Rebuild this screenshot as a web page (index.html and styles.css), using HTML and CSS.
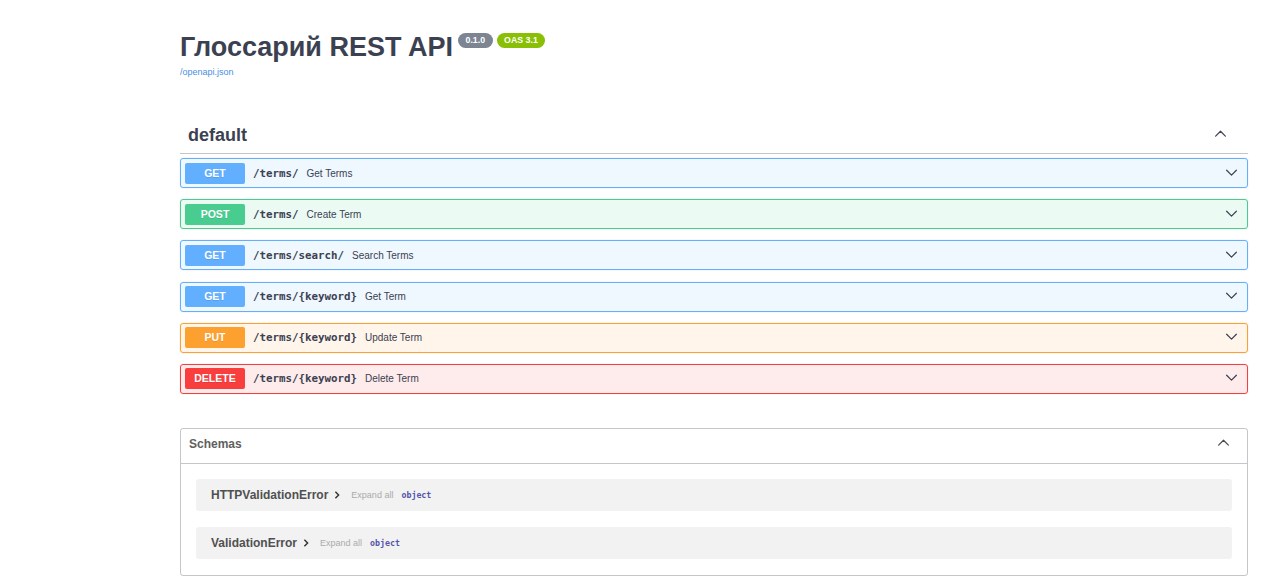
FILE: index.html
```html
<!DOCTYPE html>
<html lang="ru">
<head>
<meta charset="utf-8">
<title>Глоссарий REST API</title>
<link rel="stylesheet" href="styles.css">
</head>
<body>
<div class="wrapper">
  <section class="info">
    <div class="title-row">
      <h1 class="title">Глоссарий REST API</h1>
      <span class="badge badge-version">0.1.0</span>
      <span class="badge badge-oas">OAS 3.1</span>
    </div>
    <a class="spec-link" href="#">/openapi.json</a>
  </section>

  <section class="tag-section">
    <div class="tag-header">
      <h3 class="tag-name">default</h3>
      <svg class="arrow arrow-up" viewBox="0 0 20 20" width="15" height="15"><path d="M3.5 13.5 10 7l6.5 6.5"/></svg>
    </div>

    <div class="opblock opblock-get">
      <span class="method">GET</span>
      <span class="path">/terms/</span>
      <span class="summary">Get Terms</span>
      <svg class="arrow" viewBox="0 0 20 20" width="15" height="15"><path d="M3.5 7 10 13.5 16.5 7"/></svg>
    </div>
    <div class="opblock opblock-post">
      <span class="method">POST</span>
      <span class="path">/terms/</span>
      <span class="summary">Create Term</span>
      <svg class="arrow" viewBox="0 0 20 20" width="15" height="15"><path d="M3.5 7 10 13.5 16.5 7"/></svg>
    </div>
    <div class="opblock opblock-get">
      <span class="method">GET</span>
      <span class="path">/terms/search/</span>
      <span class="summary">Search Terms</span>
      <svg class="arrow" viewBox="0 0 20 20" width="15" height="15"><path d="M3.5 7 10 13.5 16.5 7"/></svg>
    </div>
    <div class="opblock opblock-get">
      <span class="method">GET</span>
      <span class="path">/terms/{keyword}</span>
      <span class="summary">Get Term</span>
      <svg class="arrow" viewBox="0 0 20 20" width="15" height="15"><path d="M3.5 7 10 13.5 16.5 7"/></svg>
    </div>
    <div class="opblock opblock-put">
      <span class="method">PUT</span>
      <span class="path">/terms/{keyword}</span>
      <span class="summary">Update Term</span>
      <svg class="arrow" viewBox="0 0 20 20" width="15" height="15"><path d="M3.5 7 10 13.5 16.5 7"/></svg>
    </div>
    <div class="opblock opblock-delete">
      <span class="method">DELETE</span>
      <span class="path">/terms/{keyword}</span>
      <span class="summary">Delete Term</span>
      <svg class="arrow" viewBox="0 0 20 20" width="15" height="15"><path d="M3.5 7 10 13.5 16.5 7"/></svg>
    </div>
  </section>

  <section class="models">
    <div class="models-header">
      <h4 class="models-title">Schemas</h4>
      <svg class="arrow arrow-up-light" viewBox="0 0 20 20" width="15" height="15"><path d="M3.5 13.5 10 7l6.5 6.5"/></svg>
    </div>
    <div class="models-body">
      <div class="model-container">
        <span class="model-name">HTTPValidationError</span>
        <svg class="model-toggle" viewBox="0 0 6 10" width="6" height="8"><path d="M1 1l4 4-4 4"/></svg>
        <span class="expand-all">Expand all</span>
        <span class="prop-type">object</span>
      </div>
      <div class="model-container">
        <span class="model-name">ValidationError</span>
        <svg class="model-toggle" viewBox="0 0 6 10" width="6" height="8"><path d="M1 1l4 4-4 4"/></svg>
        <span class="expand-all">Expand all</span>
        <span class="prop-type">object</span>
      </div>
    </div>
  </section>
</div>
</body>
</html>
```

FILE: styles.css
```css
html, body {
  margin: 0;
  padding: 0;
  background: #ffffff;
}

body {
  font-family: "Liberation Sans", Arial, sans-serif;
  color: #3b4151;
}

.wrapper {
  margin-left: 180px;
  width: 1068px;
  padding-top: 29px;
}

/* ---------- info ---------- */
.info {
  margin-bottom: 38px;
}

.title-row {
  display: flex;
  align-items: flex-start;
}

.title {
  margin: 0;
  font-size: 27px;
  line-height: 36px;
  font-weight: 700;
  color: #3b4151;
}

.badge {
  display: inline-block;
  margin-top: 4px;
  margin-left: 4px;
  padding: 0 7.5px;
  height: 15px;
  line-height: 15px;
  border-radius: 43px;
  font-size: 8.8px;
  font-weight: 700;
  color: #ffffff;
}

.badge-version {
  margin-left: 5px;
  background: #7d8492;
}

.badge-oas {
  background: #89bf04;
}

.spec-link {
  display: block;
  margin-top: 1px;
  font-size: 9px;
  line-height: 12px;
  color: #4990e2;
  text-decoration: none;
}

/* ---------- tag ---------- */
.tag-section {
  margin-bottom: 34px;
}

.tag-header {
  display: flex;
  align-items: center;
  justify-content: space-between;
  height: 37px;
  padding: 0 20px 0 8px;
  border-bottom: 1px solid rgba(59, 65, 81, 0.3);
  margin-bottom: 4px;
}

.tag-name {
  margin: 0;
  padding-top: 2px;
  font-size: 18px;
  font-weight: 700;
  color: #3b4151;
}

.arrow {
  fill: none;
  stroke: #3b4151;
  stroke-width: 1.6;
  stroke-linecap: round;
  stroke-linejoin: round;
}

.arrow-up {
  stroke: #3b4151;
  margin-bottom: 2px;
}

.arrow-up-light {
  stroke: #4a4a4a;
  margin-bottom: 2px;
}

/* ---------- operation blocks ---------- */
.opblock {
  display: flex;
  align-items: center;
  height: 30px;
  box-sizing: border-box;
  padding: 0 8px 0 4px;
  margin-bottom: 11.2px;
  border: 1px solid;
  border-radius: 3px;
  box-shadow: 0 0 2px rgba(0, 0, 0, 0.12);
}

.method {
  flex: none;
  width: 60px;
  height: 21px;
  line-height: 21px;
  text-align: center;
  border-radius: 2px;
  font-size: 10.5px;
  font-weight: 700;
  color: #ffffff;
  text-shadow: 0 1px 0 rgba(0, 0, 0, 0.1);
}

.path {
  margin-left: 8px;
  font-family: "DejaVu Sans Mono", "Liberation Mono", monospace;
  font-size: 10.8px;
  font-weight: 700;
  color: #3b4151;
}

.summary {
  flex: 1;
  margin-left: 8px;
  font-size: 10px;
  color: #3b4151;
}

.opblock .arrow {
  flex: none;
  margin-bottom: 2px;
}

.opblock-get {
  background: rgba(97, 175, 254, 0.1);
  border-color: #61affe;
}
.opblock-get .method { background: #61affe; }

.opblock-post {
  background: rgba(73, 204, 144, 0.1);
  border-color: #49cc90;
}
.opblock-post .method { background: #49cc90; }

.opblock-put {
  background: rgba(252, 161, 48, 0.1);
  border-color: #fca130;
}
.opblock-put .method { background: #fca130; }

.opblock-delete {
  background: rgba(249, 62, 62, 0.1);
  border-color: #f93e3e;
}
.opblock-delete .method { background: #f93e3e; }

/* ---------- models ---------- */
.models {
  border: 1px solid rgba(59, 65, 81, 0.3);
  border-radius: 3px;
}

.models-header {
  display: flex;
  align-items: center;
  justify-content: space-between;
  height: 35px;
  box-sizing: border-box;
  padding: 0 16px 4px 8px;
  border-bottom: 1px solid rgba(59, 65, 81, 0.3);
}

.models-title {
  margin: 0;
  font-size: 12px;
  font-weight: 700;
  color: #606060;
}

.models-body {
  display: flex;
  flex-direction: column;
  gap: 16px;
  padding: 15px 15px 16px;
}

.model-container {
  display: flex;
  align-items: center;
  height: 32px;
  padding-left: 15px;
  border-radius: 3px;
  background: rgba(0, 0, 0, 0.05);
}

.model-name {
  font-size: 12px;
  font-weight: 700;
  color: #505050;
}

.model-toggle {
  margin-left: 6px;
  fill: none;
  stroke: #333;
  stroke-width: 1.8;
}

.expand-all {
  margin-left: 11px;
  font-size: 9px;
  color: #aaaaaa;
}

.prop-type {
  margin-left: 8px;
  font-family: "DejaVu Sans Mono", "Liberation Mono", monospace;
  font-size: 8.3px;
  font-weight: 700;
  color: #55a;
}
```
